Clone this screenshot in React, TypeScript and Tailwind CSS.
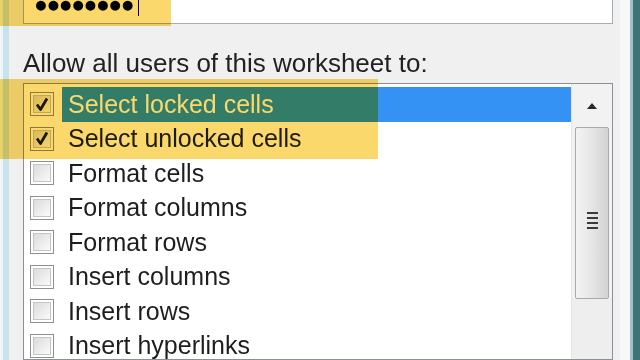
import React from "react";

const items = [
  { label: "Select locked cells", checked: true, selected: true },
  { label: "Select unlocked cells", checked: true, selected: false },
  { label: "Format cells", checked: false, selected: false },
  { label: "Format columns", checked: false, selected: false },
  { label: "Format rows", checked: false, selected: false },
  { label: "Insert columns", checked: false, selected: false },
  { label: "Insert rows", checked: false, selected: false },
  { label: "Insert hyperlinks", checked: false, selected: false },
];

function CheckBox({ checked }: { checked: boolean }) {
  return (
    <div className="w-[24px] h-[24px] border border-[#8f8f8f] bg-white p-[2px]">
      <div className="w-full h-full border border-[#c4c4c4] bg-gradient-to-br from-[#dcdcdc] to-[#fafafa] flex items-center justify-center">
        {checked && (
          <svg width="14" height="15" viewBox="0 0 14 15">
            <path
              d="M2 7.5 L5.5 12.5 L12 1.5"
              fill="none"
              stroke="#1c1c1c"
              strokeWidth="2.8"
              strokeLinejoin="round"
            />
          </svg>
        )}
      </div>
    </div>
  );
}

function ScrollBar() {
  return (
    <div className="w-[41px] flex flex-col bg-[#f2f2f2] border-l border-[#e6e6e6]">
      <div className="h-[43px] shrink-0 flex items-center justify-center">
        <svg width="14" height="10" viewBox="0 0 14 10">
          <path d="M2 8 L7 2 L12 8 Z" fill="#2a2a2a" />
        </svg>
      </div>
      <div className="h-[172px] shrink-0 mx-[3px] border border-[#a9a9a9] rounded-[2px] bg-gradient-to-r from-[#f4f4f4] via-[#e6e6e6] to-[#d2d2d2] flex items-center justify-center">
        <div className="flex flex-col gap-[3px] mt-[14px]">
          <div className="w-[11px] h-[2px] bg-[#3a3a3a]" />
          <div className="w-[11px] h-[2px] bg-[#3a3a3a]" />
          <div className="w-[11px] h-[2px] bg-[#3a3a3a]" />
          <div className="w-[11px] h-[2px] bg-[#3a3a3a]" />
        </div>
      </div>
      <div className="flex-1 bg-[#eeeeee]" />
    </div>
  );
}

export default function App() {
  return (
    <div
      className="relative w-[640px] h-[360px] overflow-hidden bg-[#f0f0f0] flex"
      style={{ fontFamily: '"Liberation Sans", Arial, sans-serif' }}
    >
      {/* window frame left */}
      <div className="w-[9px] shrink-0 flex">
        <div className="w-[3px] bg-[#eef6f9]" />
        <div className="flex-1 bg-[#c6e3ee]" />
      </div>

      <div className="flex-1 min-w-0 pl-[14px] pr-[7px] flex flex-col">
        <div className="shrink-0 mt-[-16px] h-[40px] border border-[#a7adb5] bg-white flex items-center pl-[10px]">
          <span className="text-[23px] tracking-[-1.5px] font-bold text-black leading-none">
            ●●●●●●●●
          </span>
          <span className="ml-[5px] w-[1px] h-[24px] bg-black" />
        </div>

        <div className="shrink-0 mt-[24px] text-[26px] leading-[30px] text-[#222] whitespace-nowrap">
          Allow all users of this worksheet to:
        </div>

        <div className="mt-[5px] flex-1 min-h-0 overflow-hidden border border-[#8c9096] bg-white flex">
          <div className="flex-1 pt-[3px] flex flex-col">
            {items.map((it) => (
              <div key={it.label} className="h-[34.5px] shrink-0 flex items-center">
                <div className="w-[38px] pl-[6px] flex items-center">
                  <CheckBox checked={it.checked} />
                </div>
                <div
                  className={
                    it.selected
                      ? "flex-1 h-full flex items-center pl-[6px] bg-[#3392f4] text-white text-[25px] whitespace-nowrap"
                      : "flex-1 h-full flex items-center pl-[6px] text-[#1e1e1e] text-[25px] whitespace-nowrap"
                  }
                >
                  {it.label}
                </div>
              </div>
            ))}
          </div>
          <ScrollBar />
        </div>
      </div>

      {/* window frame right */}
      <div className="w-[10px] shrink-0 bg-[#f5f7f8]" />
      <div className="w-[3px] shrink-0 bg-[#9fc3c6]" />
      <div className="w-[7px] shrink-0 bg-[#3f7478]" />

      {/* yellow highlight overlays */}
      <div className="absolute left-0 top-0 w-[171px] h-[26px] bg-[#fbd86c] mix-blend-multiply" />
      <div className="absolute left-0 top-[79px] w-[378px] h-[80px] bg-[#fbd86c] mix-blend-multiply" />
    </div>
  );
}
